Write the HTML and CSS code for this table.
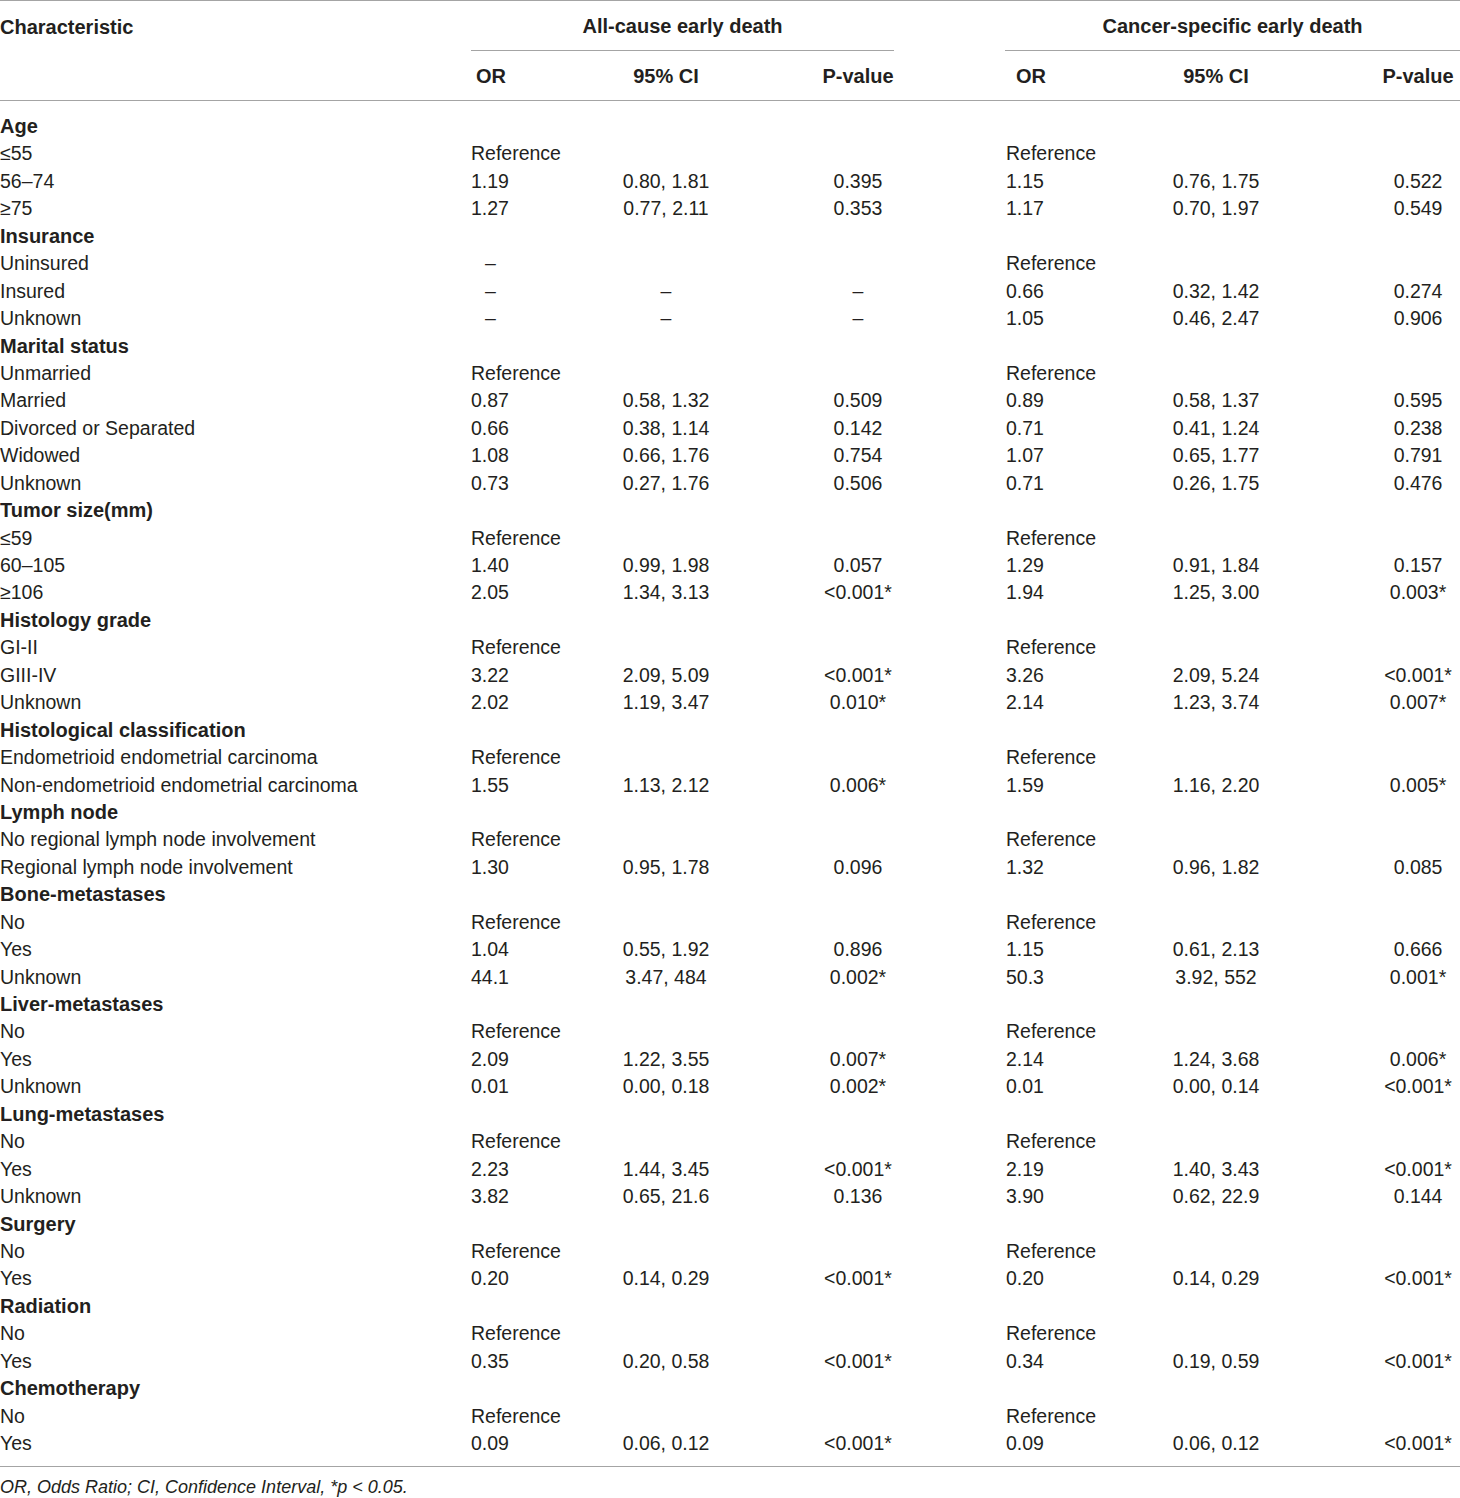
FILE: index.html
```html
<!DOCTYPE html>
<html lang="en">
<head>
  <meta charset="UTF-8" />
  <meta name="viewport" content="width=device-width, initial-scale=1" />
  <title>Early death risk factors</title>
  <link rel="stylesheet" href="styles.css">
</head>
<body>
  <table class="results">
    <colgroup>
      <col class="c-char">
      <col class="c-or1">
      <col class="c-ci1">
      <col class="c-p1">
      <col class="c-or2">
      <col class="c-ci2">
      <col class="c-p2">
    </colgroup>
    <thead>
      <tr class="head-top">
        <th rowspan="2" class="char">Characteristic</th>
        <th colspan="3" class="group group-all"><div class="group-title">All-cause early death</div></th>
        <th colspan="3" class="group group-cancer"><div class="group-title">Cancer-specific early death</div></th>
      </tr>
      <tr class="head-sub">
        <th class="or or1">OR</th>
        <th class="ci">95% CI</th>
        <th class="p">P-value</th>
        <th class="or or2">OR</th>
        <th class="ci">95% CI</th>
        <th class="p p2">P-value</th>
      </tr>
    </thead>
    <tbody>
      <tr class="cat first"><td colspan="7">Age</td></tr>
      <tr><td>≤55</td><td class="or1">Reference</td><td></td><td></td><td class="or2">Reference</td><td></td><td></td></tr>
      <tr><td>56–74</td><td class="or1">1.19</td><td class="ci">0.80, 1.81</td><td class="p">0.395</td><td class="or2">1.15</td><td class="ci">0.76, 1.75</td><td class="p p2">0.522</td></tr>
      <tr><td>≥75</td><td class="or1">1.27</td><td class="ci">0.77, 2.11</td><td class="p">0.353</td><td class="or2">1.17</td><td class="ci">0.70, 1.97</td><td class="p p2">0.549</td></tr>

      <tr class="cat"><td colspan="7">Insurance</td></tr>
      <tr><td>Uninsured</td><td class="or1 na">–</td><td></td><td></td><td class="or2">Reference</td><td></td><td></td></tr>
      <tr><td>Insured</td><td class="or1 na">–</td><td class="ci">–</td><td class="p">–</td><td class="or2">0.66</td><td class="ci">0.32, 1.42</td><td class="p p2">0.274</td></tr>
      <tr><td>Unknown</td><td class="or1 na">–</td><td class="ci">–</td><td class="p">–</td><td class="or2">1.05</td><td class="ci">0.46, 2.47</td><td class="p p2">0.906</td></tr>

      <tr class="cat"><td colspan="7">Marital status</td></tr>
      <tr><td>Unmarried</td><td class="or1">Reference</td><td></td><td></td><td class="or2">Reference</td><td></td><td></td></tr>
      <tr><td>Married</td><td class="or1">0.87</td><td class="ci">0.58, 1.32</td><td class="p">0.509</td><td class="or2">0.89</td><td class="ci">0.58, 1.37</td><td class="p p2">0.595</td></tr>
      <tr><td>Divorced or Separated</td><td class="or1">0.66</td><td class="ci">0.38, 1.14</td><td class="p">0.142</td><td class="or2">0.71</td><td class="ci">0.41, 1.24</td><td class="p p2">0.238</td></tr>
      <tr><td>Widowed</td><td class="or1">1.08</td><td class="ci">0.66, 1.76</td><td class="p">0.754</td><td class="or2">1.07</td><td class="ci">0.65, 1.77</td><td class="p p2">0.791</td></tr>
      <tr><td>Unknown</td><td class="or1">0.73</td><td class="ci">0.27, 1.76</td><td class="p">0.506</td><td class="or2">0.71</td><td class="ci">0.26, 1.75</td><td class="p p2">0.476</td></tr>

      <tr class="cat"><td colspan="7">Tumor size(mm)</td></tr>
      <tr><td>≤59</td><td class="or1">Reference</td><td></td><td></td><td class="or2">Reference</td><td></td><td></td></tr>
      <tr><td>60–105</td><td class="or1">1.40</td><td class="ci">0.99, 1.98</td><td class="p">0.057</td><td class="or2">1.29</td><td class="ci">0.91, 1.84</td><td class="p p2">0.157</td></tr>
      <tr><td>≥106</td><td class="or1">2.05</td><td class="ci">1.34, 3.13</td><td class="p">&lt;0.001*</td><td class="or2">1.94</td><td class="ci">1.25, 3.00</td><td class="p p2">0.003*</td></tr>

      <tr class="cat"><td colspan="7">Histology grade</td></tr>
      <tr><td>GI-II</td><td class="or1">Reference</td><td></td><td></td><td class="or2">Reference</td><td></td><td></td></tr>
      <tr><td>GIII-IV</td><td class="or1">3.22</td><td class="ci">2.09, 5.09</td><td class="p">&lt;0.001*</td><td class="or2">3.26</td><td class="ci">2.09, 5.24</td><td class="p p2">&lt;0.001*</td></tr>
      <tr><td>Unknown</td><td class="or1">2.02</td><td class="ci">1.19, 3.47</td><td class="p">0.010*</td><td class="or2">2.14</td><td class="ci">1.23, 3.74</td><td class="p p2">0.007*</td></tr>

      <tr class="cat"><td colspan="7">Histological classification</td></tr>
      <tr><td>Endometrioid endometrial carcinoma</td><td class="or1">Reference</td><td></td><td></td><td class="or2">Reference</td><td></td><td></td></tr>
      <tr><td>Non-endometrioid endometrial carcinoma</td><td class="or1">1.55</td><td class="ci">1.13, 2.12</td><td class="p">0.006*</td><td class="or2">1.59</td><td class="ci">1.16, 2.20</td><td class="p p2">0.005*</td></tr>

      <tr class="cat"><td colspan="7">Lymph node</td></tr>
      <tr><td>No regional lymph node involvement</td><td class="or1">Reference</td><td></td><td></td><td class="or2">Reference</td><td></td><td></td></tr>
      <tr><td>Regional lymph node involvement</td><td class="or1">1.30</td><td class="ci">0.95, 1.78</td><td class="p">0.096</td><td class="or2">1.32</td><td class="ci">0.96, 1.82</td><td class="p p2">0.085</td></tr>

      <tr class="cat"><td colspan="7">Bone-metastases</td></tr>
      <tr><td>No</td><td class="or1">Reference</td><td></td><td></td><td class="or2">Reference</td><td></td><td></td></tr>
      <tr><td>Yes</td><td class="or1">1.04</td><td class="ci">0.55, 1.92</td><td class="p">0.896</td><td class="or2">1.15</td><td class="ci">0.61, 2.13</td><td class="p p2">0.666</td></tr>
      <tr><td>Unknown</td><td class="or1">44.1</td><td class="ci">3.47, 484</td><td class="p">0.002*</td><td class="or2">50.3</td><td class="ci">3.92, 552</td><td class="p p2">0.001*</td></tr>

      <tr class="cat"><td colspan="7">Liver-metastases</td></tr>
      <tr><td>No</td><td class="or1">Reference</td><td></td><td></td><td class="or2">Reference</td><td></td><td></td></tr>
      <tr><td>Yes</td><td class="or1">2.09</td><td class="ci">1.22, 3.55</td><td class="p">0.007*</td><td class="or2">2.14</td><td class="ci">1.24, 3.68</td><td class="p p2">0.006*</td></tr>
      <tr><td>Unknown</td><td class="or1">0.01</td><td class="ci">0.00, 0.18</td><td class="p">0.002*</td><td class="or2">0.01</td><td class="ci">0.00, 0.14</td><td class="p p2">&lt;0.001*</td></tr>

      <tr class="cat"><td colspan="7">Lung-metastases</td></tr>
      <tr><td>No</td><td class="or1">Reference</td><td></td><td></td><td class="or2">Reference</td><td></td><td></td></tr>
      <tr><td>Yes</td><td class="or1">2.23</td><td class="ci">1.44, 3.45</td><td class="p">&lt;0.001*</td><td class="or2">2.19</td><td class="ci">1.40, 3.43</td><td class="p p2">&lt;0.001*</td></tr>
      <tr><td>Unknown</td><td class="or1">3.82</td><td class="ci">0.65, 21.6</td><td class="p">0.136</td><td class="or2">3.90</td><td class="ci">0.62, 22.9</td><td class="p p2">0.144</td></tr>

      <tr class="cat"><td colspan="7">Surgery</td></tr>
      <tr><td>No</td><td class="or1">Reference</td><td></td><td></td><td class="or2">Reference</td><td></td><td></td></tr>
      <tr><td>Yes</td><td class="or1">0.20</td><td class="ci">0.14, 0.29</td><td class="p">&lt;0.001*</td><td class="or2">0.20</td><td class="ci">0.14, 0.29</td><td class="p p2">&lt;0.001*</td></tr>

      <tr class="cat"><td colspan="7">Radiation</td></tr>
      <tr><td>No</td><td class="or1">Reference</td><td></td><td></td><td class="or2">Reference</td><td></td><td></td></tr>
      <tr><td>Yes</td><td class="or1">0.35</td><td class="ci">0.20, 0.58</td><td class="p">&lt;0.001*</td><td class="or2">0.34</td><td class="ci">0.19, 0.59</td><td class="p p2">&lt;0.001*</td></tr>

      <tr class="cat"><td colspan="7">Chemotherapy</td></tr>
      <tr><td>No</td><td class="or1">Reference</td><td></td><td></td><td class="or2">Reference</td><td></td><td></td></tr>
      <tr class="last"><td>Yes</td><td class="or1">0.09</td><td class="ci">0.06, 0.12</td><td class="p">&lt;0.001*</td><td class="or2">0.09</td><td class="ci">0.06, 0.12</td><td class="p p2">&lt;0.001*</td></tr>
    </tbody>
  </table>

  <p class="note">OR, Odds Ratio; CI, Confidence Interval, *p &lt; 0.05.</p>
</body>
</html>
```

FILE: styles.css
```css
body {
  margin: 0;
  background: #fff;
  color: #231f20;
  font-family: "Liberation Sans", Arial, sans-serif;
  font-size: 19.5px;
}

.results {
  width: 1460px;
  table-layout: fixed;
  border-collapse: collapse;
  border-top: 1px solid #a4a4a4;
  border-bottom: 1px solid #a4a4a4;
}

/* column widths */
.c-char { width: 471px; }
.c-or1 { width: 89px; }
.c-ci1 { width: 212px; }
.c-p1 { width: 172px; }
.c-or2 { width: 156px; }
.c-ci2 { width: 232px; }
.c-p2 { width: 128px; }

th, td {
  padding: 0;
  white-space: nowrap;
  text-align: left;
  font-weight: normal;
}

thead th {
  font-weight: bold;
  font-size: 20px;
}

.head-top th {
  vertical-align: top;
}

.char {
  padding-top: 2px;
  line-height: 49px;
}

.group-all {
  padding-right: 50px;
}

.group-cancer {
  padding-left: 61px;
}

.group-title {
  height: 50px;
  padding-top: 2px;
  box-sizing: border-box;
  line-height: 47px;
  text-align: center;
  border-bottom: 1px solid #a4a4a4;
}

.head-sub {
  border-bottom: 1px solid #a4a4a4;
}

.head-sub th {
  height: 47px;
  padding-top: 2px;
  line-height: 47px;
}

.head-sub .or1 { padding-left: 5px; }
.head-sub .or2 { padding-left: 72px; }

tbody td {
  height: 27.44px;
  line-height: 27.44px;
}

tbody tr.first td {
  padding-top: 12px;
}

tbody tr.last td {
  padding-bottom: 9px;
}

.cat td {
  font-weight: bold;
  font-size: 20px;
}

.or2 {
  padding-left: 62px;
}

td.na {
  padding-left: 14px;
}

.ci,
.p {
  text-align: center;
}

.p2 {
  padding-left: 44px;
}

.note {
  margin: 0;
  padding-top: 9px;
  line-height: 22px;
  font-size: 18px;
  font-style: italic;
}
```
